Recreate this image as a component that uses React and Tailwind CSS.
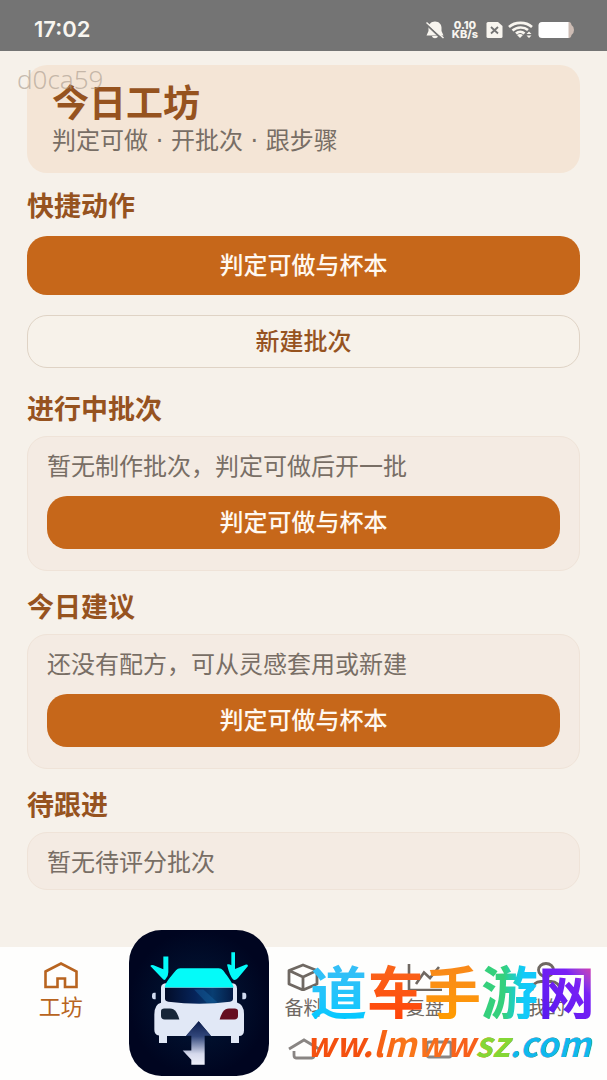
import { clsx } from "clsx";

const HomeIcon = () => (
  <svg className="h-[30px] w-9" viewBox="0 0 36 30" fill="none" stroke="currentColor" strokeWidth="2.6">
    <path d="M2.500 10.500 18 2.500 33.500 10.500V26H22V17.500H14.500V26H2.500Z" />
  </svg>
);

const BoxIcon = () => (
  <svg className="h-[30px] w-9" viewBox="0 0 36 30" fill="none" stroke="currentColor" strokeWidth="2.8" strokeLinejoin="round">
    <path d="M18 4 32 9.500V23L18 29 4 23V9.500ZM4 9.500 18 16 32 9.500M18 16V29" />
  </svg>
);

const ChartIcon = () => (
  <svg className="h-[30px] w-9" viewBox="0 0 36 30" fill="none" stroke="currentColor" strokeWidth="2.6">
    <path d="M2 3V29.500M2 29H35M9 23 17 11.500 23 17 32 6" />
  </svg>
);

const UserIcon = () => (
  <svg className="h-[30px] w-9" viewBox="0 0 36 30" fill="none" stroke="currentColor" strokeWidth="2.8">
    <ellipse cx="18" cy="9" rx="7.500" ry="6.500" />
    <path d="M4 29.500C4 23.500 8 20.500 13 20.500H23C28 20.500 32 23.500 32 29.500" />
  </svg>
);

const tabs = [
  { label: "工坊", icon: HomeIcon, active: true },
  null,
  { label: "备料", icon: BoxIcon },
  { label: "复盘", icon: ChartIcon },
  { label: "我的", icon: UserIcon },
];

const StatusBar = () => (
  <header className="flex h-[51px] items-center justify-between bg-[#747474] pl-[34px] pr-[33px] pt-2 text-[#f8f5ef]">
    <span className="font-[Inter] text-[22px] font-semibold">17:02</span>
    <div className="flex items-center gap-2">
      <svg className="h-[18px] w-[18px]" viewBox="0 0 18 18">
        <path d="M9 .5C5 .5 2.500 3.500 2.500 6.500V10L.5 14.500H17.500L15.500 10V6.500C15.500 3.500 13 .5 9 .5ZM6 15H12C11.500 18 6.500 18 6 15Z" fill="currentColor" />
        <path d="M0 3 16 18" stroke="#747474" strokeWidth="2" />
        <path d="M.5 1.500 17.500 17" stroke="currentColor" strokeWidth="1.500" />
      </svg>
      <div className="text-center font-[Inter] text-[11px] font-extrabold leading-[9px]">
        <div>0.10</div>
        <div>KB/s</div>
      </div>
      <svg className="h-[18px] w-[17px]" viewBox="0 0 17 18">
        <path d="M2 1H12L16.500 5V15.500Q16.500 17 15 17H2Q.5 17 .5 15.500V2.500Q.5 1 2 1Z" fill="currentColor" />
        <path d="M5 6 12 12.500M12 6 5 12.500" stroke="#747474" strokeWidth="1.800" />
      </svg>
      <svg className="-ml-[3px] h-[18px] w-[25px]" viewBox="0 0 25 18" fill="none" stroke="currentColor" strokeWidth="2.600">
        <path d="M1 6C7 .5 18 .5 24 6M4.500 9.500C9 5.500 16 5.500 20 9M8 12.500C10.500 10.200 14 10.200 16.500 12.500" />
        <path d="M9 14Q12 12 15 14L12 17Z" fill="currentColor" stroke="none" />
        <path d="M18.500 13 21 10.500 23.500 13ZM18.500 14.500 21 17 23.500 14.500Z" fill="currentColor" stroke="none" />
      </svg>
      <svg className="-ml-[3px] h-[18px] w-9" viewBox="0 0 36 18">
        <path d="M30 1H31Q33 1 33.500 4Q36 5.500 36 9Q36 12.500 33.500 14Q33 17 31 17H29Z" fill="#cdbcb4" />
        <path d="M4 1H30.500V17H4Q.5 17 .5 13.500V4.500Q.5 1 4 1Z" fill="#fff" />
      </svg>
    </div>
  </header>
);

const SectionTitle = ({ children }) => (
  <h2 className="text-[27px] font-bold leading-[34px] text-[#96531f]">{children}</h2>
);

const PrimaryButton = ({ className }) => (
  <button
    type="button"
    className={clsx(
      "w-full rounded-[20px] bg-[#c6671a] pb-[3px] text-2xl font-medium text-[#fff8f0]",
      className
    )}
  >
    判定可做与杯本
  </button>
);

const Card = ({ text, action }) => (
  <div className="mt-[11px] rounded-[20px] border border-[#efe3d8] bg-[#f4ebe3] px-[19px] py-3">
    <p className="text-2xl leading-8 text-[#786e65]">{text}</p>
    {action && <PrimaryButton className="mb-[9px] mt-[15px] h-[53px]" />}
  </div>
);

const AppLogo = () => (
  <svg className="absolute bottom-1 left-[129px] h-[146px] w-[140px]" viewBox="27 28 420 439" preserveAspectRatio="none">
    <defs>
      <radialGradient id="logoBg">
        <stop offset="0.4" stopColor="#01112f" />
        <stop offset="1" stopColor="#000520" />
      </radialGradient>
      <linearGradient id="arrow" x1="0" y1="0" x2="0" y2="1">
        <stop offset="0" stopColor="#0b1c4c" />
        <stop offset="0.35" stopColor="#32477b" />
        <stop offset="0.75" stopColor="#d5d9ec" />
        <stop offset="1" stopColor="#eef0fa" />
      </linearGradient>
      <linearGradient id="glass">
        <stop offset="0" stopColor="#020c28" />
        <stop offset="0.45" stopColor="#06245a" />
        <stop offset="0.7" stopColor="#083e72" />
        <stop offset="1" stopColor="#041b45" />
      </linearGradient>
    </defs>
    <rect x="27" y="28" width="420" height="439" rx="98" fill="url(#logoBg)" />
    <path d="M123 202Q123 188 140 188H335Q351 188 351 204V246Q372 252 372 280V330Q372 346 357 347V368H333V347H273L236 302 198 347H141V368H117V345Q103 344 103 328V282Q103 252 123 247Z" fill="#e1e8f6" />
    <path d="M134 201C136 184 162 157 168 149Q173 143 181 143H296Q304 143 309 149C315 158 338 184 341 201Z" fill="#04fbf9" />
    <path d="M135 202H339V235Q339 242 330 244Q238 256 145 244Q135 242 135 235Z" fill="url(#glass)" />
    <path d="M222 207H250L294 247H260Z" fill="#1762a0" opacity="0.45" />
    <path d="M107 217V236H102Q96 236 96 227Q96 217 102 217ZM367 217V236H373Q379 236 379 227Q379 217 373 217Z" fill="#d1dbef" />
    <path d="M123 272Q123 264 133 264H150C167 264 174 283 178 297H134Q123 297 123 286Z" fill="#172638" />
    <path d="M354 272Q354 264 344 264H327C310 264 303 283 299 297H343Q354 297 354 286Z" fill="#650e20" />
    <path d="M236 302 273 346H254V433H214V418L188 390H214V346H198Z" fill="url(#arrow)" />
    <path d="M130 108H145V155Q145 168 136 177Q132 180 127 174L91 136Q94 131 101 134L130 146ZM334 95H345V145L378 132Q383 131 384 136L354 172Q344 183 338 175Q329 166 321 132Q327 129 334 134Z" fill="#04fbf9" />
  </svg>
);

const SiteMark = () => (
  <div className="absolute bottom-[13px] right-3 flex flex-col items-end font-['Noto_Sans_CJK_SC',sans-serif]">
    <div className="flex text-[57px] font-bold leading-[60px] text-transparent">
      <span className="bg-linear-to-b from-[#38bdf5] to-[#00c8ff] bg-clip-text">道</span>
      <span className="bg-linear-to-b from-[#f9681c] to-[#ff4408] bg-clip-text">车</span>
      <span className="bg-linear-to-b from-[#f8861b] to-[#ff9c00] bg-clip-text">手</span>
      <span className="bg-linear-to-r from-[#35d07c] from-40% to-[#12c9fa] to-75% bg-clip-text">游</span>
      <span className="bg-linear-to-bl from-[#fa278e] via-[#7a1ff5] via-35% to-[#5418ef] bg-clip-text">网</span>
    </div>
    <a
      href="#"
      className="bg-linear-to-r from-[#f4500f] from-20% via-[#f9781a] via-35% to-[#f8601b] to-54% bg-clip-text pr-1 text-[34px] font-bold italic leading-[48px] text-transparent"
    >
      ww.lmww<span className="text-[#84d735]">s</span>
      <span className="text-[#84d735]">z</span>
      <span className="text-[#10b8ee]">.com</span>
    </a>
  </div>
);

const BottomNav = () => (
  <footer className="relative mt-auto bg-[#fefefd] pt-[14px]">
    <nav className="grid grid-cols-5">
      {tabs.map((tab, index) =>
        tab ? (
          <a
            key={index}
            href="#"
            className={clsx(
              "flex flex-col items-center",
              tab.active
                ? "text-[22px] leading-7 text-[#b86420]"
                : "text-[19px] leading-8 text-[#6f6862]"
            )}
          >
            <tab.icon />
            {tab.label}
          </a>
        ) : (
          <span key={index} />
        )
      )}
    </nav>
    {/* System keys */}
    <div className="flex h-[57px] justify-center gap-[103px] pl-[135px] pt-[14px] text-[#898583]">
      <svg className="h-6 w-8" viewBox="0 0 32 24" fill="none" stroke="currentColor" strokeWidth="2.800">
        <path d="M1 12 16 3 31 12M6 14V18Q6 21 8 21H24Q26 21 26 18V14" />
      </svg>
      <svg className="h-6 w-8" viewBox="0 0 32 24" fill="none" stroke="currentColor" strokeWidth="2.800">
        <rect x="4" y="5" width="24" height="15" rx="2" />
      </svg>
    </div>
    <AppLogo />
    <SiteMark />
  </footer>
);

const App = () => {
  return (
    <div className="relative flex min-h-screen flex-col bg-[#f6f1ea] font-['Noto_Sans_CJK_SC',sans-serif]">
      <StatusBar />
      <span className="absolute left-[17px] top-[63px] font-['Noto_Sans'] text-[26px] font-light leading-8 text-[#a69789]/60">
        d0ca59
      </span>

      <main className="px-[27px] pb-14 pt-[14px]">
        <div className="rounded-[20px] bg-[#f4e5d6] px-[25px] pb-4 pt-[13px]">
          <h1 className="text-[37px] font-bold leading-[47px] text-[#96531f]">今日工坊</h1>
          <p className="font-['DejaVu_Sans','Noto_Sans_CJK_SC',sans-serif] text-2xl leading-8 text-[#786e65]">
            判定可做 · 开批次 · 跟步骤
          </p>
        </div>

        <section className="mt-[15px]">
          <SectionTitle>快捷动作</SectionTitle>
          <PrimaryButton className="mt-[14px] h-[59px]" />
          <button
            type="button"
            className="mt-5 h-[53px] w-full rounded-[20px] border border-[#dfd3c5] bg-[#f7f2ea] pb-[3px] text-2xl font-medium text-[#96531f]"
          >
            新建批次
          </button>
        </section>

        <section className="mt-[23px]">
          <SectionTitle>进行中批次</SectionTitle>
          <Card text="暂无制作批次，判定可做后开一批" action />
        </section>

        <section className="mt-[18px]">
          <SectionTitle>今日建议</SectionTitle>
          <Card text="还没有配方，可从灵感套用或新建" action />
        </section>

        <section className="mt-[18px]">
          <SectionTitle>待跟进</SectionTitle>
          <Card text="暂无待评分批次" />
        </section>
      </main>

      <BottomNav />
    </div>
  );
};

export default App;
